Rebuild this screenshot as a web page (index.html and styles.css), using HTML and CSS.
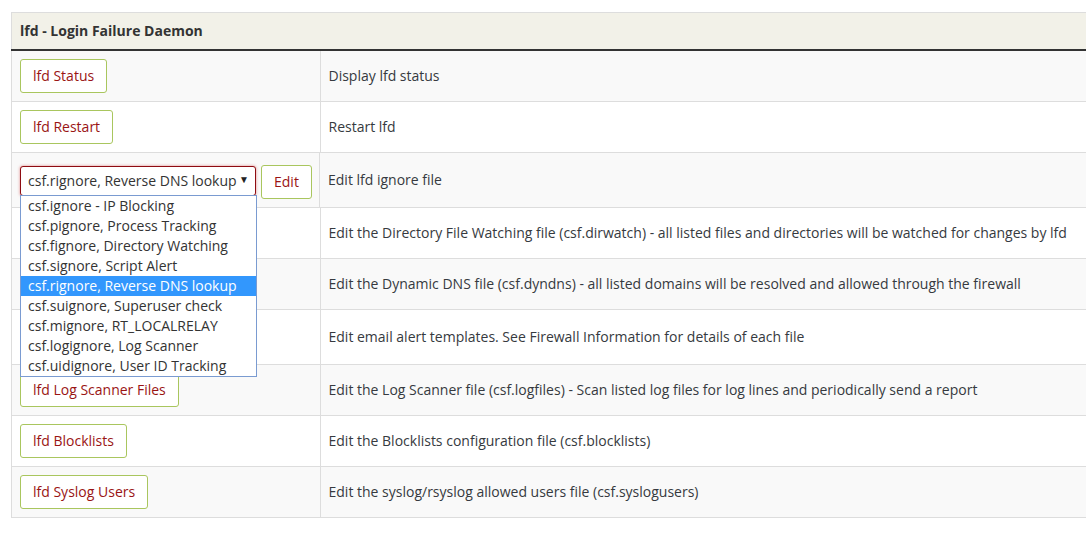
FILE: index.html
```html
<!DOCTYPE html>
<html>
<head>
<meta charset="utf-8">
<link rel="stylesheet" href="styles.css">
</head>
<body>
<div class="wrap">
<table class="tbl">
  <thead>
    <tr><th colspan="2">lfd - Login Failure Daemon</th></tr>
  </thead>
  <tbody>
    <tr class="odd">
      <td class="c1"><button class="btn">lfd Status</button></td>
      <td class="c2">Display lfd status</td>
    </tr>
    <tr>
      <td class="c1"><button class="btn">lfd Restart</button></td>
      <td class="c2">Restart lfd</td>
    </tr>
    <tr class="odd">
      <td class="c1 sel-cell">
        <div class="sel-wrap">
          <div class="select"><span>csf.rignore, Reverse DNS lookup</span><span class="arrow">&#9660;</span></div>
          <ul class="dropdown">
            <li>csf.ignore - IP Blocking</li>
            <li>csf.pignore, Process Tracking</li>
            <li>csf.fignore, Directory Watching</li>
            <li>csf.signore, Script Alert</li>
            <li class="active">csf.rignore, Reverse DNS lookup</li>
            <li>csf.suignore, Superuser check</li>
            <li>csf.mignore, RT_LOCALRELAY</li>
            <li>csf.logignore, Log Scanner</li>
            <li>csf.uidignore, User ID Tracking</li>
          </ul>
        </div>
        <button class="btn">Edit</button>
      </td>
      <td class="c2">Edit lfd ignore file</td>
    </tr>
    <tr>
      <td class="c1"><div class="hidden-slot"></div></td>
      <td class="c2">Edit the Directory File Watching file (csf.dirwatch) - all listed files and directories will be watched for changes by lfd</td>
    </tr>
    <tr class="odd">
      <td class="c1"><div class="hidden-slot"></div></td>
      <td class="c2">Edit the Dynamic DNS file (csf.dyndns) - all listed domains will be resolved and allowed through the firewall</td>
    </tr>
    <tr>
      <td class="c1 sel-cell2"><div class="hidden-slot tall"></div></td>
      <td class="c2">Edit email alert templates. See Firewall Information for details of each file</td>
    </tr>
    <tr class="odd">
      <td class="c1"><button class="btn">lfd Log Scanner Files</button></td>
      <td class="c2">Edit the Log Scanner file (csf.logfiles) - Scan listed log files for log lines and periodically send a report</td>
    </tr>
    <tr>
      <td class="c1"><button class="btn">lfd Blocklists</button></td>
      <td class="c2">Edit the Blocklists configuration file (csf.blocklists)</td>
    </tr>
    <tr class="odd">
      <td class="c1"><button class="btn">lfd Syslog Users</button></td>
      <td class="c2">Edit the syslog/rsyslog allowed users file (csf.syslogusers)</td>
    </tr>
  </tbody>
</table>
</div>
</body>
</html>
```
FILE: styles.css
```css
html, body {
  margin: 0;
  padding: 0;
  background: #fff;
  overflow: hidden;
}
body {
  font-family: "Open Sans", "Liberation Sans", sans-serif;
  font-size: 14px;
  line-height: 20px;
  color: #333;
}
.wrap {
  padding: 12px 0 0 11px;
  width: 1110px;
}
.tbl {
  border-collapse: collapse;
  width: 1100px;
  border-left: 1px solid #ddd;
  border-top: 1px solid #ddd;
  border-bottom: 1px solid #ddd;
}
.tbl th {
  background: #f2f1e8;
  text-align: left;
  font-weight: 700;
  padding: 8px 8px;
  height: 20px;
  border-bottom: 2px solid #333;
  color: #333;
}
.tbl td {
  border-top: 1px solid #ddd;
  padding: 8px 8px;
  vertical-align: middle;
}
.tbl tr.odd td {
  background: #f9f9f9;
}
.tbl tbody tr:first-child td {
  border-top: none;
}
.c1 {
  width: 291px;
  border-right: 1px solid #ddd;
}
.c2 {
  color: #363a40;
}
.btn {
  font-family: "Open Sans", "Liberation Sans", sans-serif;
  font-size: 14px;
  line-height: 20px;
  height: 34px;
  padding: 6px 12px;
  background: #fff;
  border: 1px solid #a9c65e;
  border-radius: 3px;
  color: #9a1414;
  cursor: pointer;
  display: block;
}
.hidden-slot {
  height: 34px;
}
.hidden-slot.tall {
  height: 34px;
}
.sel-cell, .sel-cell2 {
  padding-top: 12px !important;
}
.sel-cell {
  display: flex;
  align-items: flex-start;
  gap: 5px;
  height: 34px;
}
.sel-wrap {
  position: relative;
  margin-top: 1px;
}
.select {
  width: 236px;
  height: 30px;
  box-sizing: border-box;
  border: 1px solid #8e0c12;
  border-radius: 3px;
  box-shadow: 0 0 3px rgba(200, 40, 40, 0.55);
  background: #fff;
  display: flex;
  align-items: center;
  justify-content: space-between;
  padding: 0 6px 1px 7px;
  color: #333;
}
.arrow {
  font-size: 10px;
  color: #222;
  line-height: 1;
  margin-top: -3px;
}
.dropdown {
  position: absolute;
  left: 0;
  top: 29px;
  width: 237px;
  box-sizing: border-box;
  margin: 0;
  padding: 0;
  list-style: none;
  background: #fff;
  border: 1px solid #7a9bd1;
  z-index: 5;
}
.dropdown li {
  height: 20px;
  line-height: 19px;
  padding-left: 7px;
  color: #333;
  white-space: nowrap;
}
.dropdown li.active {
  background: #3297fd;
  color: #fff;
}
```
